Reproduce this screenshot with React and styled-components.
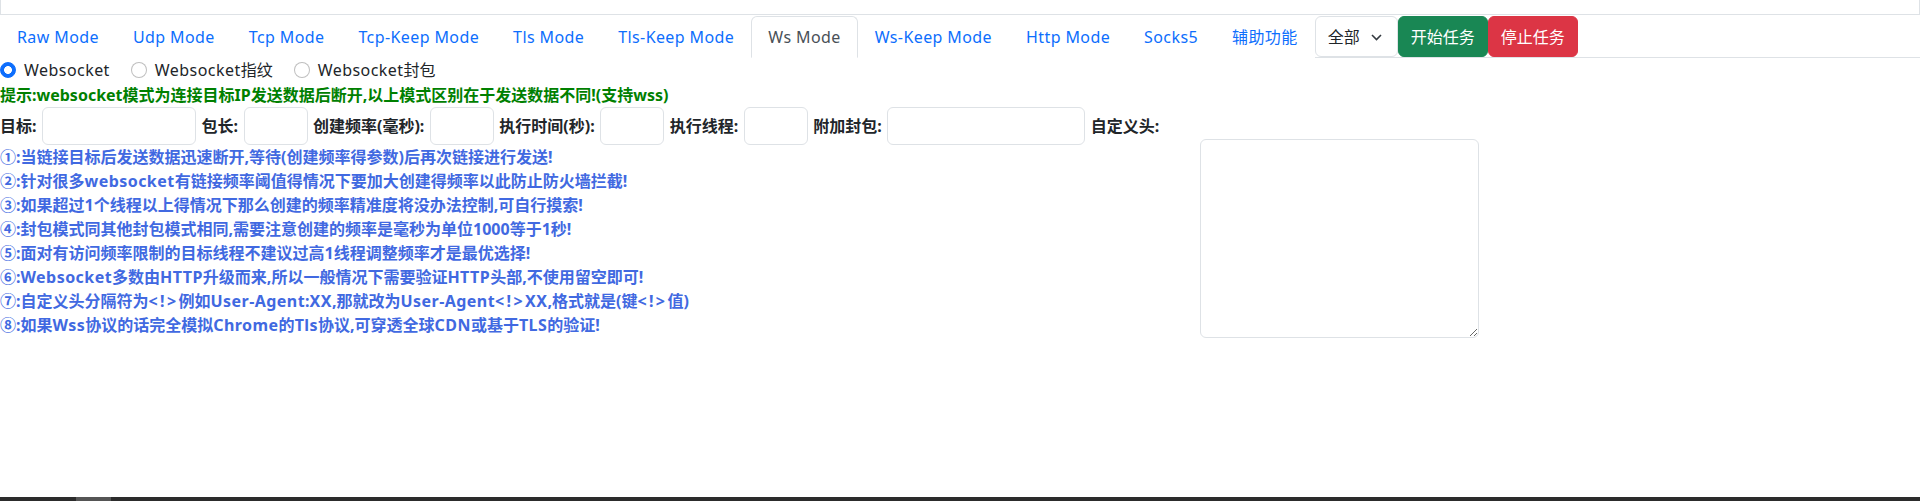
import React from "react";
import styled, { createGlobalStyle } from "styled-components";

const Global = createGlobalStyle`
  html, body { margin: 0; padding: 0; background: #fff; }
  body {
    font-family: "Noto Sans", "Noto Sans CJK SC", sans-serif;
    font-size: 16px;
    line-height: 1.5;
    color: #212529;
  }
  * { box-sizing: border-box; }
`;

const tabs = [
  "Raw Mode",
  "Udp Mode",
  "Tcp Mode",
  "Tcp-Keep Mode",
  "Tls Mode",
  "Tls-Keep Mode",
  "Ws Mode",
  "Ws-Keep Mode",
  "Http Mode",
  "Socks5",
  "辅助功能",
];

const radios = ["Websocket", "Websocket指纹", "Websocket封包"];

const fields = [
  { label: "目标:", w: 154 },
  { label: "包长:", w: 64 },
  { label: "创建频率(毫秒):", w: 64 },
  { label: "执行时间(秒):", w: 64 },
  { label: "执行线程:", w: 64 },
  { label: "附加封包:", w: 198 },
];

const notes = [
  "①:当链接目标后发送数据迅速断开,等待(创建频率得参数)后再次链接进行发送!",
  "②:针对很多websocket有链接频率阈值得情况下要加大创建得频率以此防止防火墙拦截!",
  "③:如果超过1个线程以上得情况下那么创建的频率精准度将没办法控制,可自行摸索!",
  "④:封包模式同其他封包模式相同,需要注意创建的频率是毫秒为单位1000等于1秒!",
  "⑤:面对有访问频率限制的目标线程不建议过高1线程调整频率才是最优选择!",
  "⑥:Websocket多数由HTTP升级而来,所以一般情况下需要验证HTTP头部,不使用留空即可!",
  "⑦:自定义头分隔符为<!>例如User-Agent:XX,那就改为User-Agent<!>XX,格式就是(键<!>值)",
  "⑧:如果Wss协议的话完全模拟Chrome的Tls协议,可穿透全球CDN或基于TLS的验证!",
];

// latin runs are a little wider in the original font, the <!> marker most of all
function mixed(text) {
  return text.split(/(<!>|[A-Za-z\-]+)/).map((part, i) => {
    if (i % 2 === 0) return part;
    return (
      <Latin key={i} wide={part === "<!>"}>
        {part}
      </Latin>
    );
  });
}

export default function App() {
  return (
    <Page>
      <Global />
      <LogBox />
      <Nav>
        {tabs.map((t) => (
          <Tab key={t} active={t === "Ws Mode"}>
            {t}
          </Tab>
        ))}
        <SelectBox>
          <span>全部</span>
          <svg width="11" height="7" viewBox="0 0 11 7" fill="none">
            <path d="M1 1l4.5 4.5L10 1" stroke="#343a40" strokeWidth="1.6" />
          </svg>
        </SelectBox>
        <Btn color="#198754">开始任务</Btn>
        <Btn color="#dc3545">停止任务</Btn>
      </Nav>

      <RadioRow>
        {radios.map((r, i) => (
          <RadioItem key={r}>
            <Radio type="radio" name="ws" defaultChecked={i === 0} />
            <span>{mixed(r)}</span>
          </RadioItem>
        ))}
      </RadioRow>

      <Hint>提示:websocket模式为连接目标IP发送数据后断开,以上模式区别在于发送数据不同!(支持wss)</Hint>

      <Main>
        <Left>
          <FormRow>
            {fields.map((f) => (
              <React.Fragment key={f.label}>
                <Label>{f.label}</Label>
                <Input w={f.w} />
              </React.Fragment>
            ))}
            <Label>自定义头:</Label>
          </FormRow>
          <Notes>
            {notes.map((n) => (
              <li key={n}>{mixed(n)}</li>
            ))}
          </Notes>
        </Left>
        <HeaderArea />
      </Main>

      <ScrollBar>
        <Thumb />
      </ScrollBar>
    </Page>
  );
}

const Page = styled.div`
  min-height: 100vh;
  display: flex;
  flex-direction: column;
`;

const LogBox = styled.div`
  height: 15px;
  width: 100%;
  border: 1px solid #dee2e6;
  border-top: none;
`;

const Nav = styled.ul`
  display: flex;
  margin: 1px 0 0;
  padding: 0;
  list-style: none;
  border-bottom: 1px solid #dee2e6;
`;

const Tab = styled.li`
  padding: 8px 16px;
  margin-bottom: -1px;
  border: 1px solid ${(p) => (p.active ? "#dee2e6" : "transparent")};
  border-bottom-color: ${(p) => (p.active ? "#fff" : "transparent")};
  border-radius: 6px 6px 0 0;
  background: #fff;
  color: ${(p) => (p.active ? "#495057" : "#0d6efd")};
  letter-spacing: 0.4px;
  white-space: nowrap;
  cursor: pointer;
`;

const SelectBox = styled.div`
  display: flex;
  align-items: center;
  gap: 11px;
  padding: 0 15px 0 12px;
  border: 1px solid #dee2e6;
  border-radius: 6px;
  color: #212529;
  svg {
    margin-top: 1px;
  }
`;

const Btn = styled.button`
  padding: 0 12px;
  border: 1px solid ${(p) => p.color};
  border-radius: 6px;
  background: ${(p) => p.color};
  color: #fff;
  font: inherit;
  cursor: pointer;
`;

const RadioRow = styled.div`
  display: flex;
  align-items: center;
  gap: 21px;
  height: 24px;
`;

const RadioItem = styled.label`
  display: flex;
  align-items: center;
  gap: 8px;
  color: #212529;
`;

const Radio = styled.input`
  appearance: none;
  width: 16px;
  height: 16px;
  margin: 0;
  border-radius: 50%;
  border: 1px solid rgba(0, 0, 0, 0.25);
  background: #fff;
  &:checked {
    border-color: #0d6efd;
    background: radial-gradient(circle, #fff 0 3.6px, #0d6efd 4.2px);
  }
`;

const Latin = styled.span`
  letter-spacing: ${(p) => (p.wide ? "2.4px" : "0.45px")};
`;

const Hint = styled.div`
  margin-top: 1px;
  line-height: 24px;
  color: #008000;
  font-weight: 700;
`;

const Main = styled.div`
  display: flex;
  align-items: flex-start;
`;

const Left = styled.div`
  width: 1200px;
  flex-shrink: 0;
`;

const FormRow = styled.div`
  display: flex;
  align-items: center;
  gap: 5.5px;
`;

const Label = styled.span`
  font-weight: 700;
  white-space: nowrap;
`;

const Input = styled.input`
  width: ${(p) => p.w}px;
  height: 38px;
  padding: 6px 12px;
  border: 1px solid #dee2e6;
  border-radius: 6px;
  font: inherit;
`;

const Notes = styled.ul`
  margin: 0;
  padding: 0;
  list-style: none;
  color: #4169e1;
  font-weight: 700;
  line-height: 24px;
  li {
    white-space: nowrap;
  }
`;

const HeaderArea = styled.textarea`
  width: 279px;
  height: 199px;
  margin-top: 32px;
  border: 1px solid #dee2e6;
  border-radius: 6px;
  font: inherit;
`;

const ScrollBar = styled.div`
  margin-top: auto;
  height: 4px;
  background: #2c2c2c;
`;

const Thumb = styled.div`
  margin-left: 76px;
  width: 35px;
  height: 100%;
  background: #555;
`;
